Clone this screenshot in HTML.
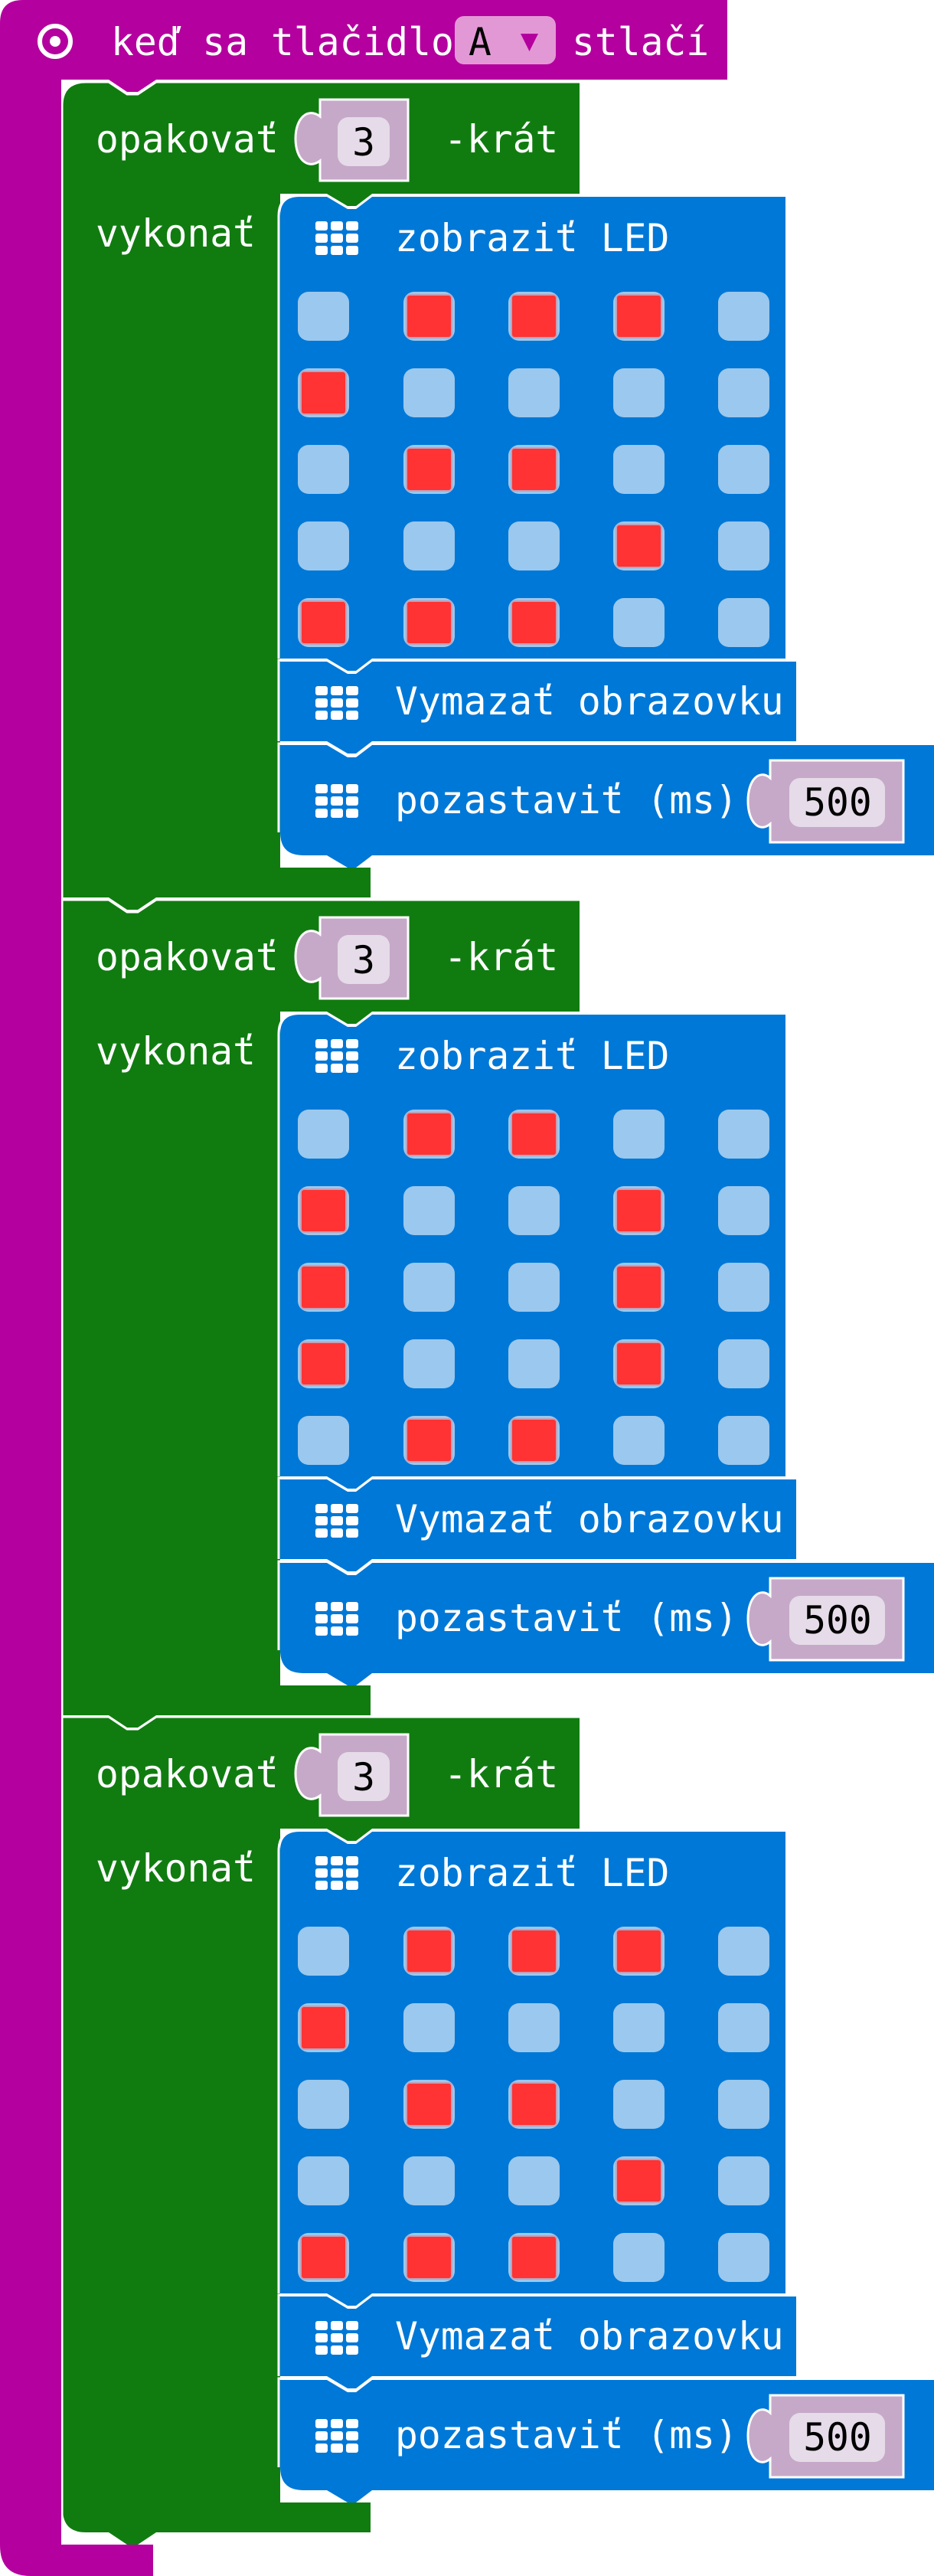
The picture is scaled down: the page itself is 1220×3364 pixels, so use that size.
<!DOCTYPE html>
<html><head><meta charset="utf-8"><style>
html,body{margin:0;padding:0;background:#fff;}
svg{display:block;}
text{font-family:"DejaVu Sans Mono","Liberation Mono",monospace;font-size:49.6px;fill:#fff;}
.k{fill:#000;}
</style></head><body>
<svg width="1220" height="3364" viewBox="0 0 1220 3364" xmlns="http://www.w3.org/2000/svg">

<!-- LOOP 3 -->
<g transform="translate(0,2243)">
<path fill="#107c10" d="M82,0 H142 L166,16 H180 L204,0 H757 V145 H486 L465,161 H454 L427,145 H366 V1025 H484 V1064 H204 L180,1080 H166 L142,1064 H112 Q82,1064 82,1034 Z"/>
<polyline fill="none" stroke="#fff" stroke-width="3" points="81,1064 81,-1 142,-1 166,15 180,15 204,-1 757,-1"/>
<path fill="#0078d7" d="M366,865 H427 L454,881 H465 L486,865 H1220 V1009 H486 L465,1025 H454 L427,1009 H396 Q366,1009 366,979 Z"/>
<polyline fill="none" stroke="#fff" stroke-width="3" points="364,979 364,863 427,863 454,879 465,879 486,863 1220,863"/>
<path fill="#0078d7" d="M366,756 H427 L454,772 H465 L486,756 H1040 V860 H486 L465,876 H454 L427,860 H366 Z"/>
<polyline fill="none" stroke="#fff" stroke-width="3" points="364,860 364,754 427,754 454,770 465,770 486,754 1040,754"/>
<path fill="#0078d7" d="M366,174 Q366,149 391,149 H427 L454,165 H465 L486,149 H1026 V752 H486 L465,768 H454 L427,752 H366 Z"/>
<path fill="none" stroke="#fff" stroke-width="3" d="M364,752 V174 Q364,147 391,147 H427 L454,163 H465 L486,147 H1026"/>
<path fill="#107c10" d="M427,145 L454,161 H465 L486,145 Z"/>
<text x="125" y="91">opakovať</text><text x="580" y="91">-krát</text><text x="125" y="214">vykonať</text>
<path fill="#c6a9c8" stroke="#fff" stroke-width="3" d="M418,22 H533 V128 H418 V102 C402,114 386,100 386,73 C386,46 402,32 418,44 Z"/>
<rect x="441" y="45" width="68" height="64" rx="14" fill="#e6dbe8"/><text class="k" x="475" y="95" text-anchor="middle">3</text>
<g fill="#fff"><rect x="412" y="181" width="16" height="12" rx="3"/><rect x="432" y="181" width="16" height="12" rx="3"/><rect x="452" y="181" width="16" height="12" rx="3"/><rect x="412" y="197" width="16" height="12" rx="3"/><rect x="432" y="197" width="16" height="12" rx="3"/><rect x="452" y="197" width="16" height="12" rx="3"/><rect x="412" y="213" width="16" height="12" rx="3"/><rect x="432" y="213" width="16" height="12" rx="3"/><rect x="452" y="213" width="16" height="12" rx="3"/></g>
<text x="516" y="220">zobraziť LED</text>
<g fill="#fff"><rect x="412" y="788" width="16" height="12" rx="3"/><rect x="432" y="788" width="16" height="12" rx="3"/><rect x="452" y="788" width="16" height="12" rx="3"/><rect x="412" y="804" width="16" height="12" rx="3"/><rect x="432" y="804" width="16" height="12" rx="3"/><rect x="452" y="804" width="16" height="12" rx="3"/><rect x="412" y="820" width="16" height="12" rx="3"/><rect x="432" y="820" width="16" height="12" rx="3"/><rect x="452" y="820" width="16" height="12" rx="3"/></g>
<text x="516" y="825">Vymazať obrazovku</text>
<g fill="#fff"><rect x="412" y="916" width="16" height="12" rx="3"/><rect x="432" y="916" width="16" height="12" rx="3"/><rect x="452" y="916" width="16" height="12" rx="3"/><rect x="412" y="932" width="16" height="12" rx="3"/><rect x="432" y="932" width="16" height="12" rx="3"/><rect x="452" y="932" width="16" height="12" rx="3"/><rect x="412" y="948" width="16" height="12" rx="3"/><rect x="432" y="948" width="16" height="12" rx="3"/><rect x="452" y="948" width="16" height="12" rx="3"/></g>
<text x="516" y="954">pozastaviť (ms)</text>
<path fill="#c6a9c8" stroke="#fff" stroke-width="3" d="M1006,885 H1180 V992 H1006 V968 C992,980 977,966 977,938 C977,910 992,896 1006,908 Z"/>
<rect x="1031" y="908" width="125" height="64" rx="14" fill="#e6dbe8"/><text class="k" x="1094" y="957" text-anchor="middle">500</text>
<g fill="#9bc8ee">
<rect x="389" y="273" width="67" height="64" rx="14"/><rect x="527" y="273" width="67" height="64" rx="14"/><rect x="664" y="273" width="67" height="64" rx="14"/><rect x="801" y="273" width="67" height="64" rx="14"/><rect x="938" y="273" width="67" height="64" rx="14"/>
<rect x="389" y="373" width="67" height="64" rx="14"/><rect x="527" y="373" width="67" height="64" rx="14"/><rect x="664" y="373" width="67" height="64" rx="14"/><rect x="801" y="373" width="67" height="64" rx="14"/><rect x="938" y="373" width="67" height="64" rx="14"/>
<rect x="389" y="473" width="67" height="64" rx="14"/><rect x="527" y="473" width="67" height="64" rx="14"/><rect x="664" y="473" width="67" height="64" rx="14"/><rect x="801" y="473" width="67" height="64" rx="14"/><rect x="938" y="473" width="67" height="64" rx="14"/>
<rect x="389" y="573" width="67" height="64" rx="14"/><rect x="527" y="573" width="67" height="64" rx="14"/><rect x="664" y="573" width="67" height="64" rx="14"/><rect x="801" y="573" width="67" height="64" rx="14"/><rect x="938" y="573" width="67" height="64" rx="14"/>
<rect x="389" y="673" width="67" height="64" rx="14"/><rect x="527" y="673" width="67" height="64" rx="14"/><rect x="664" y="673" width="67" height="64" rx="14"/><rect x="801" y="673" width="67" height="64" rx="14"/><rect x="938" y="673" width="67" height="64" rx="14"/>
</g>
<g fill="#ff3333" stroke="#c0a0b8" stroke-width="2">
<rect x="531" y="277" width="59" height="56" rx="4"/><rect x="668" y="277" width="59" height="56" rx="4"/><rect x="805" y="277" width="59" height="56" rx="4"/>
<rect x="393" y="377" width="59" height="56" rx="4"/>
<rect x="531" y="477" width="59" height="56" rx="4"/><rect x="668" y="477" width="59" height="56" rx="4"/>
<rect x="805" y="577" width="59" height="56" rx="4"/>
<rect x="393" y="677" width="59" height="56" rx="4"/><rect x="531" y="677" width="59" height="56" rx="4"/><rect x="668" y="677" width="59" height="56" rx="4"/>
</g>
</g>

<!-- LOOP 2 -->
<g transform="translate(0,1176)">
<path fill="#107c10" d="M82,0 H142 L166,16 H180 L204,0 H757 V145 H486 L465,161 H454 L427,145 H366 V1025 H484 V1064 H204 L180,1080 H166 L142,1064 H82 Z"/>
<polyline fill="none" stroke="#fff" stroke-width="3" points="81,1064 81,-1 142,-1 166,15 180,15 204,-1 757,-1"/>
<path fill="#0078d7" d="M366,865 H427 L454,881 H465 L486,865 H1220 V1009 H486 L465,1025 H454 L427,1009 H396 Q366,1009 366,979 Z"/>
<polyline fill="none" stroke="#fff" stroke-width="3" points="364,979 364,863 427,863 454,879 465,879 486,863 1220,863"/>
<path fill="#0078d7" d="M366,756 H427 L454,772 H465 L486,756 H1040 V860 H486 L465,876 H454 L427,860 H366 Z"/>
<polyline fill="none" stroke="#fff" stroke-width="3" points="364,860 364,754 427,754 454,770 465,770 486,754 1040,754"/>
<path fill="#0078d7" d="M366,174 Q366,149 391,149 H427 L454,165 H465 L486,149 H1026 V752 H486 L465,768 H454 L427,752 H366 Z"/>
<path fill="none" stroke="#fff" stroke-width="3" d="M364,752 V174 Q364,147 391,147 H427 L454,163 H465 L486,147 H1026"/>
<path fill="#107c10" d="M427,145 L454,161 H465 L486,145 Z"/>
<text x="125" y="91">opakovať</text><text x="580" y="91">-krát</text><text x="125" y="214">vykonať</text>
<path fill="#c6a9c8" stroke="#fff" stroke-width="3" d="M418,22 H533 V128 H418 V102 C402,114 386,100 386,73 C386,46 402,32 418,44 Z"/>
<rect x="441" y="45" width="68" height="64" rx="14" fill="#e6dbe8"/><text class="k" x="475" y="95" text-anchor="middle">3</text>
<g fill="#fff"><rect x="412" y="181" width="16" height="12" rx="3"/><rect x="432" y="181" width="16" height="12" rx="3"/><rect x="452" y="181" width="16" height="12" rx="3"/><rect x="412" y="197" width="16" height="12" rx="3"/><rect x="432" y="197" width="16" height="12" rx="3"/><rect x="452" y="197" width="16" height="12" rx="3"/><rect x="412" y="213" width="16" height="12" rx="3"/><rect x="432" y="213" width="16" height="12" rx="3"/><rect x="452" y="213" width="16" height="12" rx="3"/></g>
<text x="516" y="220">zobraziť LED</text>
<g fill="#fff"><rect x="412" y="788" width="16" height="12" rx="3"/><rect x="432" y="788" width="16" height="12" rx="3"/><rect x="452" y="788" width="16" height="12" rx="3"/><rect x="412" y="804" width="16" height="12" rx="3"/><rect x="432" y="804" width="16" height="12" rx="3"/><rect x="452" y="804" width="16" height="12" rx="3"/><rect x="412" y="820" width="16" height="12" rx="3"/><rect x="432" y="820" width="16" height="12" rx="3"/><rect x="452" y="820" width="16" height="12" rx="3"/></g>
<text x="516" y="825">Vymazať obrazovku</text>
<g fill="#fff"><rect x="412" y="916" width="16" height="12" rx="3"/><rect x="432" y="916" width="16" height="12" rx="3"/><rect x="452" y="916" width="16" height="12" rx="3"/><rect x="412" y="932" width="16" height="12" rx="3"/><rect x="432" y="932" width="16" height="12" rx="3"/><rect x="452" y="932" width="16" height="12" rx="3"/><rect x="412" y="948" width="16" height="12" rx="3"/><rect x="432" y="948" width="16" height="12" rx="3"/><rect x="452" y="948" width="16" height="12" rx="3"/></g>
<text x="516" y="954">pozastaviť (ms)</text>
<path fill="#c6a9c8" stroke="#fff" stroke-width="3" d="M1006,885 H1180 V992 H1006 V968 C992,980 977,966 977,938 C977,910 992,896 1006,908 Z"/>
<rect x="1031" y="908" width="125" height="64" rx="14" fill="#e6dbe8"/><text class="k" x="1094" y="957" text-anchor="middle">500</text>
<g fill="#9bc8ee">
<rect x="389" y="273" width="67" height="64" rx="14"/><rect x="527" y="273" width="67" height="64" rx="14"/><rect x="664" y="273" width="67" height="64" rx="14"/><rect x="801" y="273" width="67" height="64" rx="14"/><rect x="938" y="273" width="67" height="64" rx="14"/>
<rect x="389" y="373" width="67" height="64" rx="14"/><rect x="527" y="373" width="67" height="64" rx="14"/><rect x="664" y="373" width="67" height="64" rx="14"/><rect x="801" y="373" width="67" height="64" rx="14"/><rect x="938" y="373" width="67" height="64" rx="14"/>
<rect x="389" y="473" width="67" height="64" rx="14"/><rect x="527" y="473" width="67" height="64" rx="14"/><rect x="664" y="473" width="67" height="64" rx="14"/><rect x="801" y="473" width="67" height="64" rx="14"/><rect x="938" y="473" width="67" height="64" rx="14"/>
<rect x="389" y="573" width="67" height="64" rx="14"/><rect x="527" y="573" width="67" height="64" rx="14"/><rect x="664" y="573" width="67" height="64" rx="14"/><rect x="801" y="573" width="67" height="64" rx="14"/><rect x="938" y="573" width="67" height="64" rx="14"/>
<rect x="389" y="673" width="67" height="64" rx="14"/><rect x="527" y="673" width="67" height="64" rx="14"/><rect x="664" y="673" width="67" height="64" rx="14"/><rect x="801" y="673" width="67" height="64" rx="14"/><rect x="938" y="673" width="67" height="64" rx="14"/>
</g>
<g fill="#ff3333" stroke="#c0a0b8" stroke-width="2">
<rect x="531" y="277" width="59" height="56" rx="4"/><rect x="668" y="277" width="59" height="56" rx="4"/>
<rect x="393" y="377" width="59" height="56" rx="4"/><rect x="805" y="377" width="59" height="56" rx="4"/>
<rect x="393" y="477" width="59" height="56" rx="4"/><rect x="805" y="477" width="59" height="56" rx="4"/>
<rect x="393" y="577" width="59" height="56" rx="4"/><rect x="805" y="577" width="59" height="56" rx="4"/>
<rect x="531" y="677" width="59" height="56" rx="4"/><rect x="668" y="677" width="59" height="56" rx="4"/>
</g>
</g>

<!-- LOOP 1 -->
<g transform="translate(0,108)">
<path fill="#107c10" d="M82,30 Q82,0 112,0 H142 L166,16 H180 L204,0 H757 V145 H486 L465,161 H454 L427,145 H366 V1025 H484 V1064 H204 L180,1080 H166 L142,1064 H82 Z"/>
<path fill="none" stroke="#fff" stroke-width="3" d="M81,1064 V30 Q81,-1 112,-1 H142 L166,15 H180 L204,-1 H757"/>
<path fill="#0078d7" d="M366,865 H427 L454,881 H465 L486,865 H1220 V1009 H486 L465,1025 H454 L427,1009 H396 Q366,1009 366,979 Z"/>
<polyline fill="none" stroke="#fff" stroke-width="3" points="364,979 364,863 427,863 454,879 465,879 486,863 1220,863"/>
<path fill="#0078d7" d="M366,756 H427 L454,772 H465 L486,756 H1040 V860 H486 L465,876 H454 L427,860 H366 Z"/>
<polyline fill="none" stroke="#fff" stroke-width="3" points="364,860 364,754 427,754 454,770 465,770 486,754 1040,754"/>
<path fill="#0078d7" d="M366,174 Q366,149 391,149 H427 L454,165 H465 L486,149 H1026 V752 H486 L465,768 H454 L427,752 H366 Z"/>
<path fill="none" stroke="#fff" stroke-width="3" d="M364,752 V174 Q364,147 391,147 H427 L454,163 H465 L486,147 H1026"/>
<path fill="#107c10" d="M427,145 L454,161 H465 L486,145 Z"/>
<text x="125" y="91">opakovať</text><text x="580" y="91">-krát</text><text x="125" y="214">vykonať</text>
<path fill="#c6a9c8" stroke="#fff" stroke-width="3" d="M418,22 H533 V128 H418 V102 C402,114 386,100 386,73 C386,46 402,32 418,44 Z"/>
<rect x="441" y="45" width="68" height="64" rx="14" fill="#e6dbe8"/><text class="k" x="475" y="95" text-anchor="middle">3</text>
<g fill="#fff"><rect x="412" y="181" width="16" height="12" rx="3"/><rect x="432" y="181" width="16" height="12" rx="3"/><rect x="452" y="181" width="16" height="12" rx="3"/><rect x="412" y="197" width="16" height="12" rx="3"/><rect x="432" y="197" width="16" height="12" rx="3"/><rect x="452" y="197" width="16" height="12" rx="3"/><rect x="412" y="213" width="16" height="12" rx="3"/><rect x="432" y="213" width="16" height="12" rx="3"/><rect x="452" y="213" width="16" height="12" rx="3"/></g>
<text x="516" y="220">zobraziť LED</text>
<g fill="#fff"><rect x="412" y="788" width="16" height="12" rx="3"/><rect x="432" y="788" width="16" height="12" rx="3"/><rect x="452" y="788" width="16" height="12" rx="3"/><rect x="412" y="804" width="16" height="12" rx="3"/><rect x="432" y="804" width="16" height="12" rx="3"/><rect x="452" y="804" width="16" height="12" rx="3"/><rect x="412" y="820" width="16" height="12" rx="3"/><rect x="432" y="820" width="16" height="12" rx="3"/><rect x="452" y="820" width="16" height="12" rx="3"/></g>
<text x="516" y="825">Vymazať obrazovku</text>
<g fill="#fff"><rect x="412" y="916" width="16" height="12" rx="3"/><rect x="432" y="916" width="16" height="12" rx="3"/><rect x="452" y="916" width="16" height="12" rx="3"/><rect x="412" y="932" width="16" height="12" rx="3"/><rect x="432" y="932" width="16" height="12" rx="3"/><rect x="452" y="932" width="16" height="12" rx="3"/><rect x="412" y="948" width="16" height="12" rx="3"/><rect x="432" y="948" width="16" height="12" rx="3"/><rect x="452" y="948" width="16" height="12" rx="3"/></g>
<text x="516" y="954">pozastaviť (ms)</text>
<path fill="#c6a9c8" stroke="#fff" stroke-width="3" d="M1006,885 H1180 V992 H1006 V968 C992,980 977,966 977,938 C977,910 992,896 1006,908 Z"/>
<rect x="1031" y="908" width="125" height="64" rx="14" fill="#e6dbe8"/><text class="k" x="1094" y="957" text-anchor="middle">500</text>
<g fill="#9bc8ee">
<rect x="389" y="273" width="67" height="64" rx="14"/><rect x="527" y="273" width="67" height="64" rx="14"/><rect x="664" y="273" width="67" height="64" rx="14"/><rect x="801" y="273" width="67" height="64" rx="14"/><rect x="938" y="273" width="67" height="64" rx="14"/>
<rect x="389" y="373" width="67" height="64" rx="14"/><rect x="527" y="373" width="67" height="64" rx="14"/><rect x="664" y="373" width="67" height="64" rx="14"/><rect x="801" y="373" width="67" height="64" rx="14"/><rect x="938" y="373" width="67" height="64" rx="14"/>
<rect x="389" y="473" width="67" height="64" rx="14"/><rect x="527" y="473" width="67" height="64" rx="14"/><rect x="664" y="473" width="67" height="64" rx="14"/><rect x="801" y="473" width="67" height="64" rx="14"/><rect x="938" y="473" width="67" height="64" rx="14"/>
<rect x="389" y="573" width="67" height="64" rx="14"/><rect x="527" y="573" width="67" height="64" rx="14"/><rect x="664" y="573" width="67" height="64" rx="14"/><rect x="801" y="573" width="67" height="64" rx="14"/><rect x="938" y="573" width="67" height="64" rx="14"/>
<rect x="389" y="673" width="67" height="64" rx="14"/><rect x="527" y="673" width="67" height="64" rx="14"/><rect x="664" y="673" width="67" height="64" rx="14"/><rect x="801" y="673" width="67" height="64" rx="14"/><rect x="938" y="673" width="67" height="64" rx="14"/>
</g>
<g fill="#ff3333" stroke="#c0a0b8" stroke-width="2">
<rect x="531" y="277" width="59" height="56" rx="4"/><rect x="668" y="277" width="59" height="56" rx="4"/><rect x="805" y="277" width="59" height="56" rx="4"/>
<rect x="393" y="377" width="59" height="56" rx="4"/>
<rect x="531" y="477" width="59" height="56" rx="4"/><rect x="668" y="477" width="59" height="56" rx="4"/>
<rect x="805" y="577" width="59" height="56" rx="4"/>
<rect x="393" y="677" width="59" height="56" rx="4"/><rect x="531" y="677" width="59" height="56" rx="4"/><rect x="668" y="677" width="59" height="56" rx="4"/>
</g>
</g>

<!-- HAT -->
<path fill="#b4009e" d="M0,30 Q0,0 30,0 H950 V104 H204 L180,120 H166 L142,104 H80 V3323 H200 V3364 H40 Q0,3364 0,3324 Z"/>
<circle cx="72" cy="54" r="20" fill="none" stroke="#fff" stroke-width="6"/>
<circle cx="72" cy="54" r="7" fill="#fff"/>
<text x="145" y="72">keď sa tlačidlo</text>
<rect x="594" y="21" width="132" height="63" rx="12" fill="#e398d6"/>
<text class="k" x="612" y="72">A</text>
<path d="M680,44 H703 L691.5,67 Z" fill="#b4009e"/>
<text x="747" y="72">stlačí</text>
</svg>
</body></html>
